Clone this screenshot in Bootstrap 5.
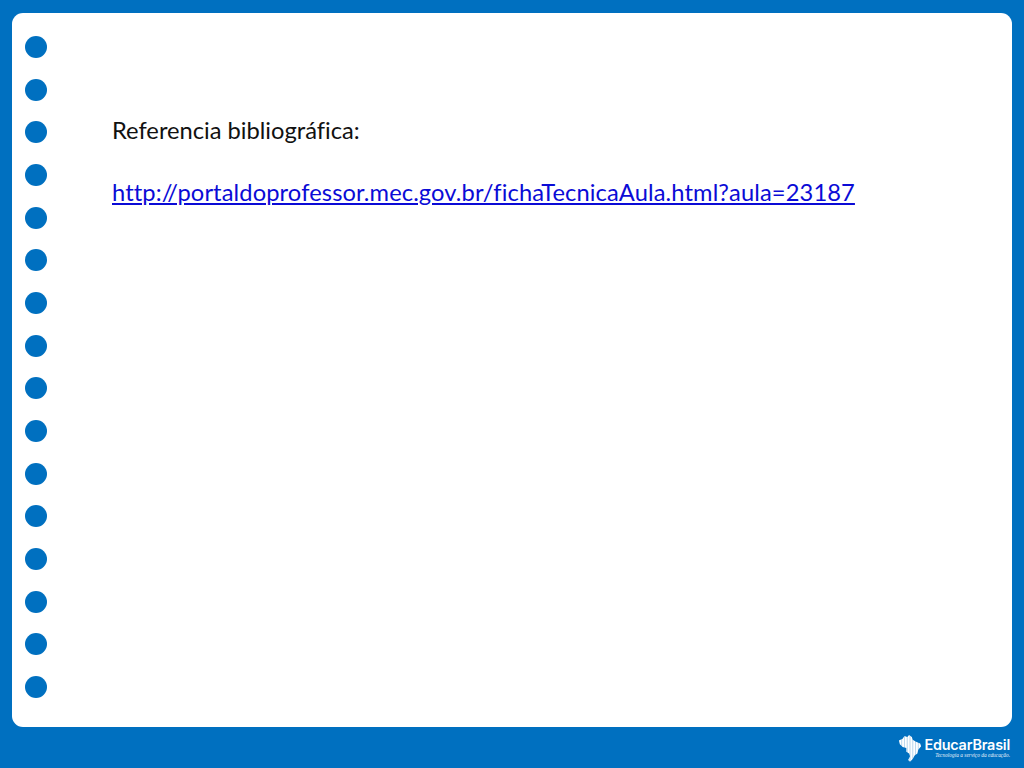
<!DOCTYPE html>
<html lang="pt">
<head>
<meta charset="utf-8">
<title>Referencia bibliográfica</title>
<link href="https://cdn.jsdelivr.net/npm/bootstrap@5.3.0/dist/css/bootstrap.min.css" rel="stylesheet">
<style>
html,body{margin:0;height:768px;overflow:hidden;}
body{background:#0070c0;font-family:Lato,"Liberation Sans",sans-serif;}
.slide-frame{height:768px;padding:13px 12px 0 12px;}
.slide-sheet{height:714px;background:#fff;border-radius:11px;}
.dot-rail{width:48px;padding:23px 0 29px 13px;}
.ring-dot{width:22px;height:22px;border-radius:50%;background:#0070c0;}
.slide-copy{padding:102px 0 0 52px;font-size:23.7px;line-height:30px;color:#111;font-variant-ligatures:none;}
.slide-copy p{margin:0 0 32px 0;}
.slide-copy a{color:#0b0bd6;letter-spacing:.11px;}
.brand-foot{height:41px;padding-right:2px;padding-top:1px;}
.brand-map{width:24px;height:28px;margin-right:2px;}
.brand-name{font-family:Inter,"Liberation Sans",sans-serif;font-size:14.4px;font-weight:600;line-height:15px;color:#fff;letter-spacing:-.2px;}
.brand-tag{font-family:"Liberation Serif",serif;font-style:italic;font-size:5.4px;line-height:7px;color:#e6f1fa;text-align:right;}
</style>
</head>
<body>
<div class="slide-frame d-flex flex-column">
  <main class="slide-sheet d-flex">
    <div class="dot-rail d-flex flex-column justify-content-between flex-shrink-0">
      <div class="ring-dot"></div><div class="ring-dot"></div><div class="ring-dot"></div><div class="ring-dot"></div>
      <div class="ring-dot"></div><div class="ring-dot"></div><div class="ring-dot"></div><div class="ring-dot"></div>
      <div class="ring-dot"></div><div class="ring-dot"></div><div class="ring-dot"></div><div class="ring-dot"></div>
      <div class="ring-dot"></div><div class="ring-dot"></div><div class="ring-dot"></div><div class="ring-dot"></div>
    </div>
    <div class="slide-copy">
      <p>Referencia bibliográfica:</p>
      <p><a href="#">http://portaldoprofessor.mec.gov.br/fichaTecnicaAula.html?aula=23187</a></p>
    </div>
  </main>
  <footer class="brand-foot d-flex justify-content-end align-items-center">
    <svg class="brand-map" viewBox="0 0 26 30" aria-hidden="true">
      <path fill="#fff" d="M1 7 5 5 7 2 10 3 12 1 15 3 16 6 19 8 24 10 25 13 22 17 21 21 18 23 16 27 13 30 11 28 13 24 12 21 9 19 9 15 5 14 2 11Z"/>
      <g stroke="#0070c0" stroke-width=".5" opacity=".6"><path d="M4 3V16M7 1V18M10 1V22M13 1V30M16 1V28M19 5V24M22 8V20"/></g>
    </svg>
    <div>
      <div class="brand-name">EducarBrasil</div>
      <div class="brand-tag">Tecnologia a serviço da educação.</div>
    </div>
  </footer>
</div>
</body>
</html>
